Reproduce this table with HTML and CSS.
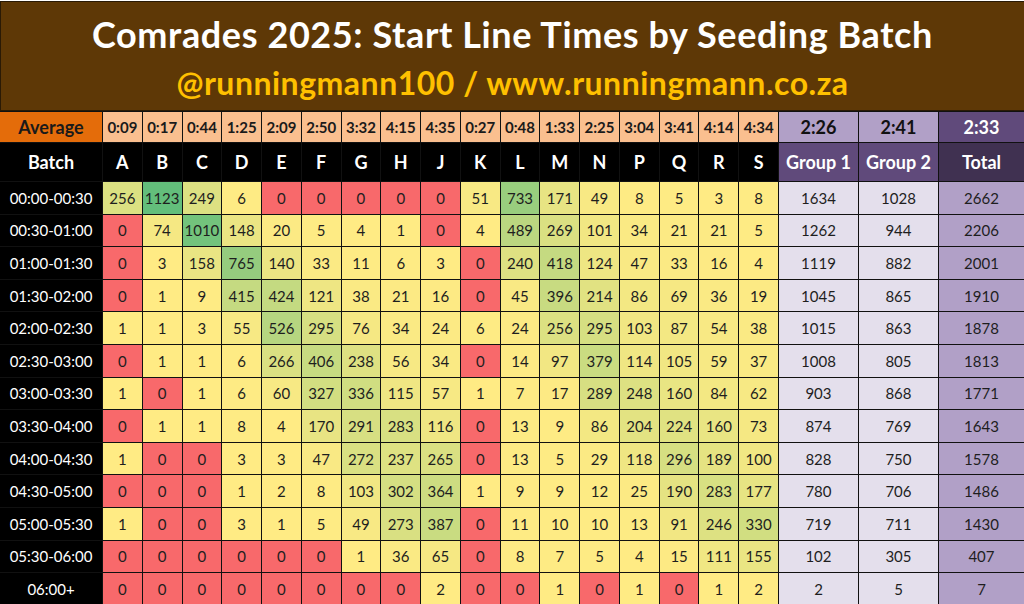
FILE: index.html
```html
<!DOCTYPE html>
<html lang="en">
<head>
<meta charset="utf-8">
<title>Comrades 2025: Start Line Times by Seeding Batch</title>
<link rel="stylesheet" href="styles.css">
<script src="script.js" defer></script>
</head>
<body>
<div class="sheet">
  <header class="title">
    <h1>Comrades 2025: Start Line Times by Seeding Batch</h1>
    <p>@runningmann100 / www.runningmann.co.za</p>
  </header>
  <div class="grid">
    <div class="c avg-label">Average</div>
    <div class="c avg">0:09</div><div class="c avg">0:17</div><div class="c avg">0:44</div><div class="c avg">1:25</div><div class="c avg">2:09</div><div class="c avg">2:50</div><div class="c avg">3:32</div><div class="c avg">4:15</div><div class="c avg">4:35</div><div class="c avg">0:27</div><div class="c avg">0:48</div><div class="c avg">1:33</div><div class="c avg">2:25</div><div class="c avg">3:04</div><div class="c avg">3:41</div><div class="c avg">4:14</div><div class="c avg">4:34</div>
    <div class="c avg-g">2:26</div><div class="c avg-g">2:41</div><div class="c avg-t">2:33</div>

    <div class="c hd">Batch</div>
    <div class="c hd">A</div><div class="c hd">B</div><div class="c hd">C</div><div class="c hd">D</div><div class="c hd">E</div><div class="c hd">F</div><div class="c hd">G</div><div class="c hd">H</div><div class="c hd">J</div><div class="c hd">K</div><div class="c hd">L</div><div class="c hd">M</div><div class="c hd">N</div><div class="c hd">P</div><div class="c hd">Q</div><div class="c hd">R</div><div class="c hd">S</div>
    <div class="c hd grp">Group 1</div><div class="c hd grp">Group 2</div><div class="c hd tot">Total</div>

    <div class="c lbl">00:00-00:30</div>
    <div class="c h">256</div><div class="c h">1123</div><div class="c h">249</div><div class="c h">6</div><div class="c h">0</div><div class="c h">0</div><div class="c h">0</div><div class="c h">0</div><div class="c h">0</div><div class="c h">51</div><div class="c h">733</div><div class="c h">171</div><div class="c h">49</div><div class="c h">8</div><div class="c h">5</div><div class="c h">3</div><div class="c h">8</div>
    <div class="c g">1634</div><div class="c g">1028</div><div class="c t">2662</div>

    <div class="c lbl">00:30-01:00</div>
    <div class="c h">0</div><div class="c h">74</div><div class="c h">1010</div><div class="c h">148</div><div class="c h">20</div><div class="c h">5</div><div class="c h">4</div><div class="c h">1</div><div class="c h">0</div><div class="c h">4</div><div class="c h">489</div><div class="c h">269</div><div class="c h">101</div><div class="c h">34</div><div class="c h">21</div><div class="c h">21</div><div class="c h">5</div>
    <div class="c g">1262</div><div class="c g">944</div><div class="c t">2206</div>

    <div class="c lbl">01:00-01:30</div>
    <div class="c h">0</div><div class="c h">3</div><div class="c h">158</div><div class="c h">765</div><div class="c h">140</div><div class="c h">33</div><div class="c h">11</div><div class="c h">6</div><div class="c h">3</div><div class="c h">0</div><div class="c h">240</div><div class="c h">418</div><div class="c h">124</div><div class="c h">47</div><div class="c h">33</div><div class="c h">16</div><div class="c h">4</div>
    <div class="c g">1119</div><div class="c g">882</div><div class="c t">2001</div>

    <div class="c lbl">01:30-02:00</div>
    <div class="c h">0</div><div class="c h">1</div><div class="c h">9</div><div class="c h">415</div><div class="c h">424</div><div class="c h">121</div><div class="c h">38</div><div class="c h">21</div><div class="c h">16</div><div class="c h">0</div><div class="c h">45</div><div class="c h">396</div><div class="c h">214</div><div class="c h">86</div><div class="c h">69</div><div class="c h">36</div><div class="c h">19</div>
    <div class="c g">1045</div><div class="c g">865</div><div class="c t">1910</div>

    <div class="c lbl">02:00-02:30</div>
    <div class="c h">1</div><div class="c h">1</div><div class="c h">3</div><div class="c h">55</div><div class="c h">526</div><div class="c h">295</div><div class="c h">76</div><div class="c h">34</div><div class="c h">24</div><div class="c h">6</div><div class="c h">24</div><div class="c h">256</div><div class="c h">295</div><div class="c h">103</div><div class="c h">87</div><div class="c h">54</div><div class="c h">38</div>
    <div class="c g">1015</div><div class="c g">863</div><div class="c t">1878</div>

    <div class="c lbl">02:30-03:00</div>
    <div class="c h">0</div><div class="c h">1</div><div class="c h">1</div><div class="c h">6</div><div class="c h">266</div><div class="c h">406</div><div class="c h">238</div><div class="c h">56</div><div class="c h">34</div><div class="c h">0</div><div class="c h">14</div><div class="c h">97</div><div class="c h">379</div><div class="c h">114</div><div class="c h">105</div><div class="c h">59</div><div class="c h">37</div>
    <div class="c g">1008</div><div class="c g">805</div><div class="c t">1813</div>

    <div class="c lbl">03:00-03:30</div>
    <div class="c h">1</div><div class="c h">0</div><div class="c h">1</div><div class="c h">6</div><div class="c h">60</div><div class="c h">327</div><div class="c h">336</div><div class="c h">115</div><div class="c h">57</div><div class="c h">1</div><div class="c h">7</div><div class="c h">17</div><div class="c h">289</div><div class="c h">248</div><div class="c h">160</div><div class="c h">84</div><div class="c h">62</div>
    <div class="c g">903</div><div class="c g">868</div><div class="c t">1771</div>

    <div class="c lbl">03:30-04:00</div>
    <div class="c h">0</div><div class="c h">1</div><div class="c h">1</div><div class="c h">8</div><div class="c h">4</div><div class="c h">170</div><div class="c h">291</div><div class="c h">283</div><div class="c h">116</div><div class="c h">0</div><div class="c h">13</div><div class="c h">9</div><div class="c h">86</div><div class="c h">204</div><div class="c h">224</div><div class="c h">160</div><div class="c h">73</div>
    <div class="c g">874</div><div class="c g">769</div><div class="c t">1643</div>

    <div class="c lbl">04:00-04:30</div>
    <div class="c h">1</div><div class="c h">0</div><div class="c h">0</div><div class="c h">3</div><div class="c h">3</div><div class="c h">47</div><div class="c h">272</div><div class="c h">237</div><div class="c h">265</div><div class="c h">0</div><div class="c h">13</div><div class="c h">5</div><div class="c h">29</div><div class="c h">118</div><div class="c h">296</div><div class="c h">189</div><div class="c h">100</div>
    <div class="c g">828</div><div class="c g">750</div><div class="c t">1578</div>

    <div class="c lbl">04:30-05:00</div>
    <div class="c h">0</div><div class="c h">0</div><div class="c h">0</div><div class="c h">1</div><div class="c h">2</div><div class="c h">8</div><div class="c h">103</div><div class="c h">302</div><div class="c h">364</div><div class="c h">1</div><div class="c h">9</div><div class="c h">9</div><div class="c h">12</div><div class="c h">25</div><div class="c h">190</div><div class="c h">283</div><div class="c h">177</div>
    <div class="c g">780</div><div class="c g">706</div><div class="c t">1486</div>

    <div class="c lbl">05:00-05:30</div>
    <div class="c h">1</div><div class="c h">0</div><div class="c h">0</div><div class="c h">3</div><div class="c h">1</div><div class="c h">5</div><div class="c h">49</div><div class="c h">273</div><div class="c h">387</div><div class="c h">0</div><div class="c h">11</div><div class="c h">10</div><div class="c h">10</div><div class="c h">13</div><div class="c h">91</div><div class="c h">246</div><div class="c h">330</div>
    <div class="c g">719</div><div class="c g">711</div><div class="c t">1430</div>

    <div class="c lbl">05:30-06:00</div>
    <div class="c h">0</div><div class="c h">0</div><div class="c h">0</div><div class="c h">0</div><div class="c h">0</div><div class="c h">0</div><div class="c h">1</div><div class="c h">36</div><div class="c h">65</div><div class="c h">0</div><div class="c h">8</div><div class="c h">7</div><div class="c h">5</div><div class="c h">4</div><div class="c h">15</div><div class="c h">111</div><div class="c h">155</div>
    <div class="c g">102</div><div class="c g">305</div><div class="c t">407</div>

    <div class="c lbl">06:00+</div>
    <div class="c h">0</div><div class="c h">0</div><div class="c h">0</div><div class="c h">0</div><div class="c h">0</div><div class="c h">0</div><div class="c h">0</div><div class="c h">0</div><div class="c h">2</div><div class="c h">0</div><div class="c h">0</div><div class="c h">1</div><div class="c h">0</div><div class="c h">1</div><div class="c h">0</div><div class="c h">1</div><div class="c h">2</div>
    <div class="c g">2</div><div class="c g">5</div><div class="c t">7</div>
  </div>
</div>
</body>
</html>
```

FILE: styles.css
```css
* { box-sizing: border-box; }

html, body {
  margin: 0;
  padding: 0;
  background: #ffffff;
}

body {
  font-family: Lato, "Open Sans", sans-serif;
  width: 1024px;
  height: 604px;
  overflow: hidden;
}

.sheet {
  width: 1024px;
  padding-top: 1px;
}

.title {
  height: 110px;
  background: #5e3806;
  border: 1px solid #2a1a05;
  border-right: 0;
  display: flex;
  flex-direction: column;
  align-items: center;
  padding-top: 11px;
}

.title h1 {
  margin: 0;
  font-size: 36px;
  line-height: 42px;
  letter-spacing: 0.6px;
  font-weight: 700;
  color: #ffffff;
}

.title p {
  margin: 8px 0 0;
  font-size: 32px;
  line-height: 40px;
  letter-spacing: 0.5px;
  font-weight: 700;
  color: #ffc000;
}

.grid {
  display: grid;
  grid-template-columns: 102px repeat(17, 1fr) 79px 79px 85px;
  grid-template-rows: 30px 38px repeat(13, 31.6px);
  gap: 1px;
  background: #111111;
  border-top: 1px solid #111111;
}

.c {
  display: flex;
  align-items: center;
  justify-content: center;
  font-size: 15px;
  color: #1e1e1e;
  white-space: nowrap;
}

.avg-label {
  background: #e46c0a;
  font-weight: 700;
  font-size: 18px;
  color: #1a1a1a;
}

.avg {
  background: #fabf8f;
  font-weight: 700;
  font-size: 15px;
  color: #1a1a1a;
}

.avg-g {
  background: #b1a0c7;
  font-weight: 700;
  font-size: 18px;
  color: #111111;
}

.avg-t {
  background: #604a7b;
  font-weight: 700;
  font-size: 18px;
  color: #ffffff;
}

.hd {
  background: #000000;
  color: #ffffff;
  font-weight: 700;
  font-size: 18px;
}

.hd.grp {
  background: #604a7b;
}

.hd.tot {
  background: #403151;
}

.lbl {
  background: #000000;
  color: #ffffff;
  font-size: 15px;
}

.h {
  background: #ffeb84;
}

.g {
  background: #e4dfec;
}

.t {
  background: #b1a0c7;
}
```

FILE: script.js
```js
(function () {
  var red = [248, 105, 107];
  var yellow = [255, 235, 132];
  var green = [99, 190, 123];
  var max = 1123;
  var cells = document.querySelectorAll('.grid .h');
  cells.forEach(function (el) {
    var v = parseFloat(el.textContent);
    var c;
    if (v <= 0) {
      c = red;
    } else {
      var t = Math.min(1, (v - 1) / (max - 1));
      c = yellow.map(function (y, i) { return Math.round(y + (green[i] - y) * t); });
    }
    el.style.background = 'rgb(' + c.join(',') + ')';
  });
})();
```
